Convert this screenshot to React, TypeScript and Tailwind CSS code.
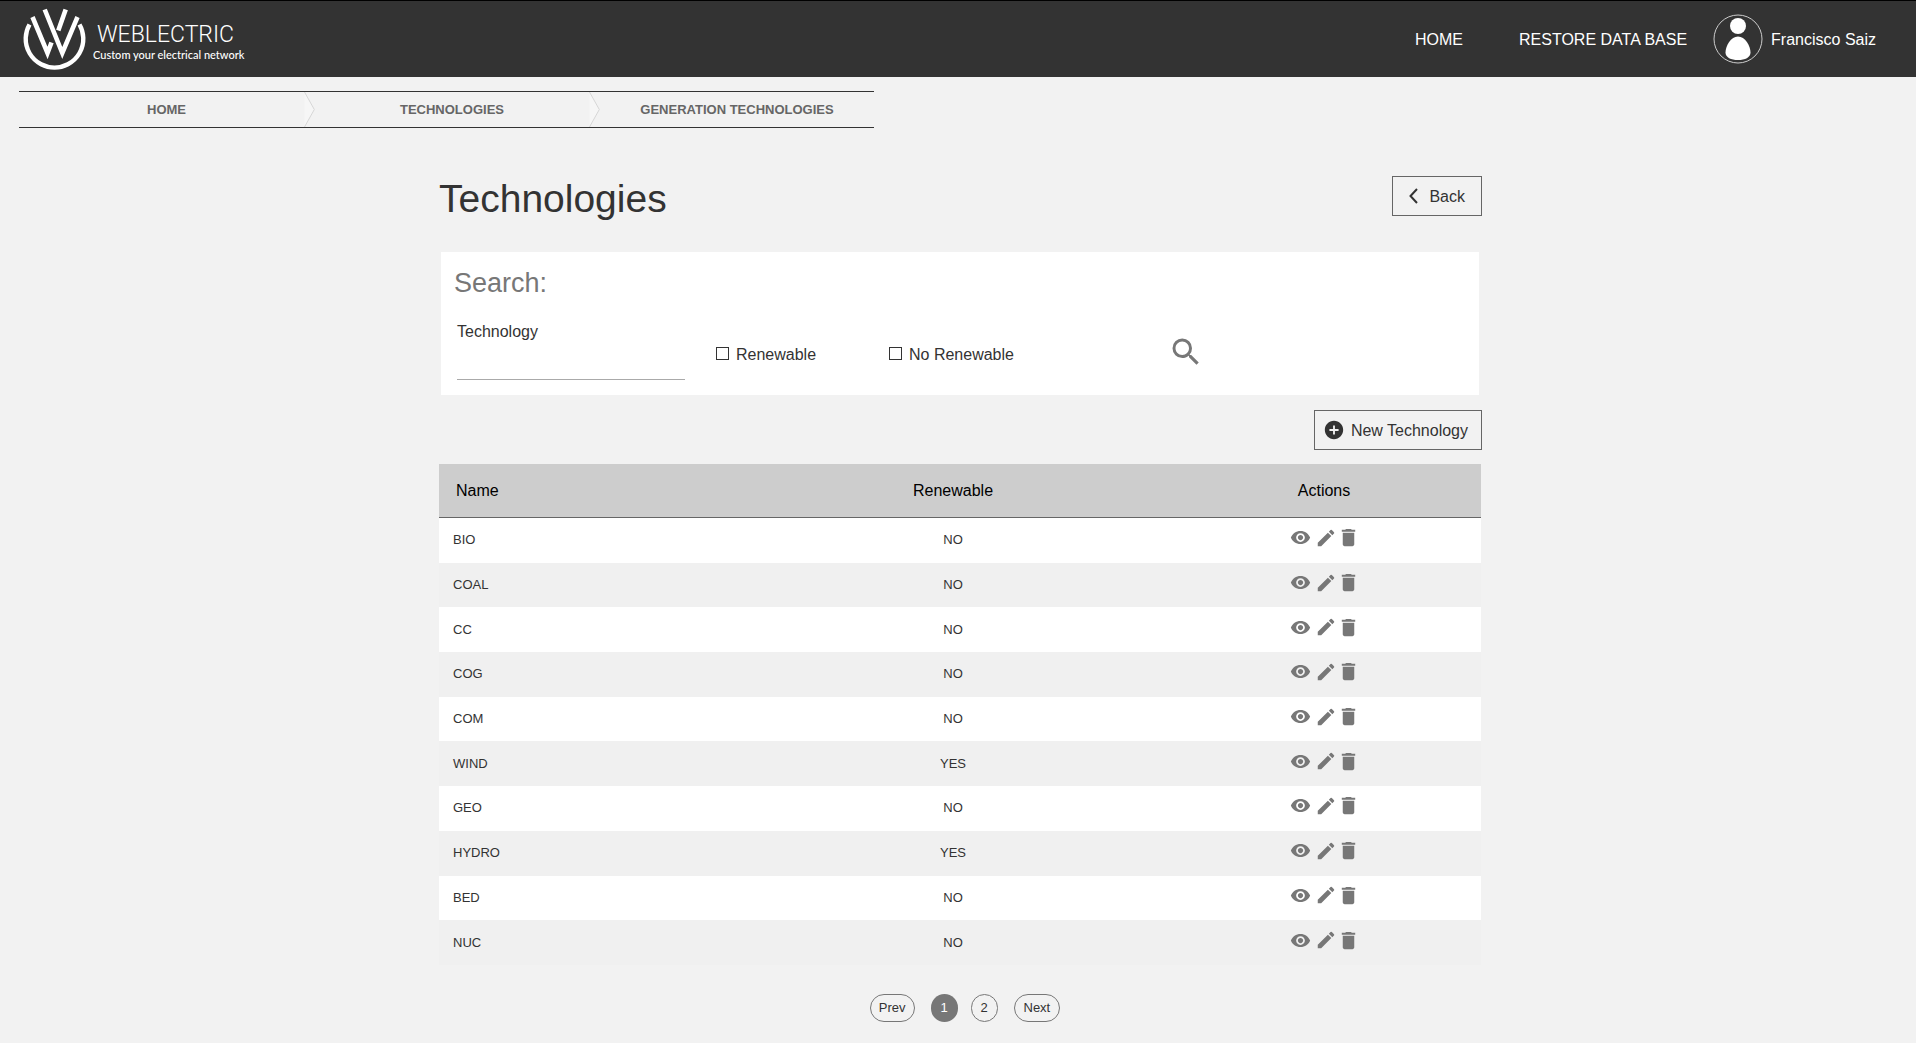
import React from 'react';
import { MdVisibility, MdEdit, MdDelete, MdSearch, MdAddCircle } from 'react-icons/md';

const rows: [string, string][] = [
  ['BIO', 'NO'],
  ['COAL', 'NO'],
  ['CC', 'NO'],
  ['COG', 'NO'],
  ['COM', 'NO'],
  ['WIND', 'YES'],
  ['GEO', 'NO'],
  ['HYDRO', 'YES'],
  ['BED', 'NO'],
  ['NUC', 'NO'],
];

function Logo() {
  return (
    <a href="#" className="flex items-center gap-1.5 text-white" aria-label="Weblectric home">
      <svg viewBox="0 0 64 64" className="size-16" fill="none" stroke="currentColor" strokeWidth="4.6">
        <path d="M6.500 17.500A28.800 28.800 0 1 0 56.500 17.500" strokeWidth="4.4" />
        <path d="M9.500 10L24.500 46L28.500 35.500" />
        <path d="M21.700 2.500L39.300 46L54.500 10" />
        <path d="M42.700 2.500L35.300 23.500" />
      </svg>
      <span className="flex flex-col pt-1">
        <span className="pl-1 font-['Roboto',sans-serif] text-[23px] font-light leading-7">WEBLECTRIC</span>
        <span className="font-['Lato',sans-serif] text-[11px] font-medium leading-3">Custom your electrical network</span>
      </span>
    </a>
  );
}

function Avatar() {
  return (
    <svg viewBox="0 0 50 50" className="size-[50px]">
      <circle cx="25" cy="25" r="24" fill="none" stroke="#ccc" strokeWidth="1" />
      <circle cx="25" cy="12" r="8" fill="#fff" />
      <path d="M25 22.500C32 22.500 37.500 32 37.500 38.500C37.500 43.500 32 46 25 46C18 46 12.500 43.500 12.500 38.500C12.500 32 18 22.500 25 22.500Z" fill="#fff" />
    </svg>
  );
}

function Chevron() {
  return (
    <svg viewBox="0 0 11 35" className="h-[35px] w-[11px] shrink-0" fill="none">
      <path d="M0.500 0L10.500 17.500L0.500 35Z" fill="#f6f6f6" />
      <path d="M0.500 0L10.300 17.500L0.500 35" stroke="#d6d6d6" />
    </svg>
  );
}

function Check({ label }: { label: string }) {
  return (
    <label className="flex items-start gap-[7px]">
      <input type="checkbox" className="mt-1 size-[13px] appearance-none border border-[#333] bg-white checked:bg-[#333]" />
      <span>{label}</span>
    </label>
  );
}

export default function App() {
  return (
    <div className="min-h-screen bg-[#f2f2f2] font-['Liberation_Sans',Arial,sans-serif] text-base text-[#333]">
      <header className="flex h-[77px] items-center justify-between border-t border-black bg-[#333] pl-[23px] pr-10 text-white">
        <Logo />
        <nav className="flex items-center">
          <a href="#" className="pt-0.5">HOME</a>
          <a href="#" className="ml-14 pt-0.5">RESTORE DATA BASE</a>
          <a href="#" className="ml-[26px] flex items-center gap-2">
            <Avatar />
            <span className="pt-0.5">Francisco Saiz</span>
          </a>
        </nav>
      </header>

      <nav aria-label="Breadcrumb" className="ml-[19px] mt-3.5 max-w-[855px]">
        <ol className="grid grid-cols-3 border-y border-[#333] text-[13px] font-bold text-[#666]">
          <li className="flex h-[35px] items-center justify-center pl-2.5">
            <a href="#">HOME</a>
          </li>
          <li className="flex items-center">
            <Chevron />
            <a href="#" className="flex-1 text-center">TECHNOLOGIES</a>
          </li>
          <li className="flex items-center">
            <Chevron />
            <a href="#" className="flex-1 text-center">GENERATION TECHNOLOGIES</a>
          </li>
        </ol>
      </nav>

      <main className="pl-1">
        <div className="mx-auto max-w-[1042px] pt-12">
          <div className="flex items-start justify-between">
            <h1 className="text-[39px] leading-[46px]">Technologies</h1>
            <button className="-mr-px flex h-10 items-center border border-[#666] px-4">
              <svg viewBox="0 0 9 16" className="mr-[11px] h-4 w-[9px]" fill="none" stroke="currentColor" strokeWidth="2">
                <path d="M8 1L1.500 8L8 15" />
              </svg>
              <span className="pt-px">Back</span>
            </button>
          </div>

          <form className="mx-0.5 mt-[30px] h-[143px] bg-white px-4 pt-3" onSubmit={(e) => e.preventDefault()}>
            <h2 className="-ml-[3px] pt-px text-[27px] leading-9 text-[#777]">Search:</h2>
            <div className="mt-[19px] flex items-start">
              <div className="flex w-[228px] flex-col">
                <label htmlFor="technology" className="leading-6">Technology</label>
                <input id="technology" type="text" className="h-9 border-b border-[#aaa] bg-transparent outline-none" />
              </div>
              <div className="ml-[31px] flex w-[173px] pt-[23px]"><Check label="Renewable" /></div>
              <div className="flex w-[279px] pt-[23px]"><Check label="No Renewable" /></div>
              <button type="submit" aria-label="Search" className="pt-3.5 text-[#777]">
                <MdSearch className="size-9" />
              </button>
            </div>
          </form>

          <div className="mt-[15px] flex justify-end">
            <button className="-mr-px flex h-10 items-center gap-1.5 border border-[#666] pl-2 pr-[13px]">
              <MdAddCircle className="size-[22px]" />
              <span className="pt-px">New Technology</span>
            </button>
          </div>

          <table className="mt-3.5 h-[501px] w-full table-fixed border-separate border-spacing-0">
            <colgroup>
              <col className="w-[300px]" />
              <col className="w-[428px]" />
              <col />
            </colgroup>
            <thead>
              <tr className="h-[54px] bg-[#cdcdcd] text-black">
                <th scope="col" className="h-[54px] border-b border-[#666] pl-[17px] text-left font-normal">Name</th>
                <th scope="col" className="border-b border-[#666] font-normal">Renewable</th>
                <th scope="col" className="border-b border-[#666] font-normal">Actions</th>
              </tr>
            </thead>
            <tbody>
              {rows.map(([name, renewable]) => (
                <tr key={name} className="text-[13px] leading-4 odd:bg-white even:bg-[#f0f0f0]">
                  <td className="pl-3.5">{name}</td>
                  <td className="text-center">{renewable}</td>
                  <td className="pb-[5px] pl-0.5 text-[#777]">
                    <div className="flex items-center justify-center">
                      <button aria-label={`View ${name}`}><MdVisibility className="size-[21px]" /></button>
                      <button aria-label={`Edit ${name}`} className="ml-1"><MdEdit className="size-[22px]" /></button>
                      <button aria-label={`Delete ${name}`}><MdDelete className="size-[23px]" /></button>
                    </div>
                  </td>
                </tr>
              ))}
            </tbody>
          </table>

          <nav aria-label="Pagination" className="mt-[29px] flex items-center justify-center pl-2.5 text-[13px] leading-4">
            <button className="h-7 rounded-full border border-[#777] px-2">Prev</button>
            <button aria-current="page" className="ml-4 h-7 w-[27px] rounded-full bg-[#777] text-white">1</button>
            <button className="ml-[13px] h-7 w-[27px] rounded-full border border-[#777]">2</button>
            <button className="ml-4 h-7 rounded-full border border-[#777] px-[9px]">Next</button>
          </nav>
        </div>
      </main>
    </div>
  );
}
